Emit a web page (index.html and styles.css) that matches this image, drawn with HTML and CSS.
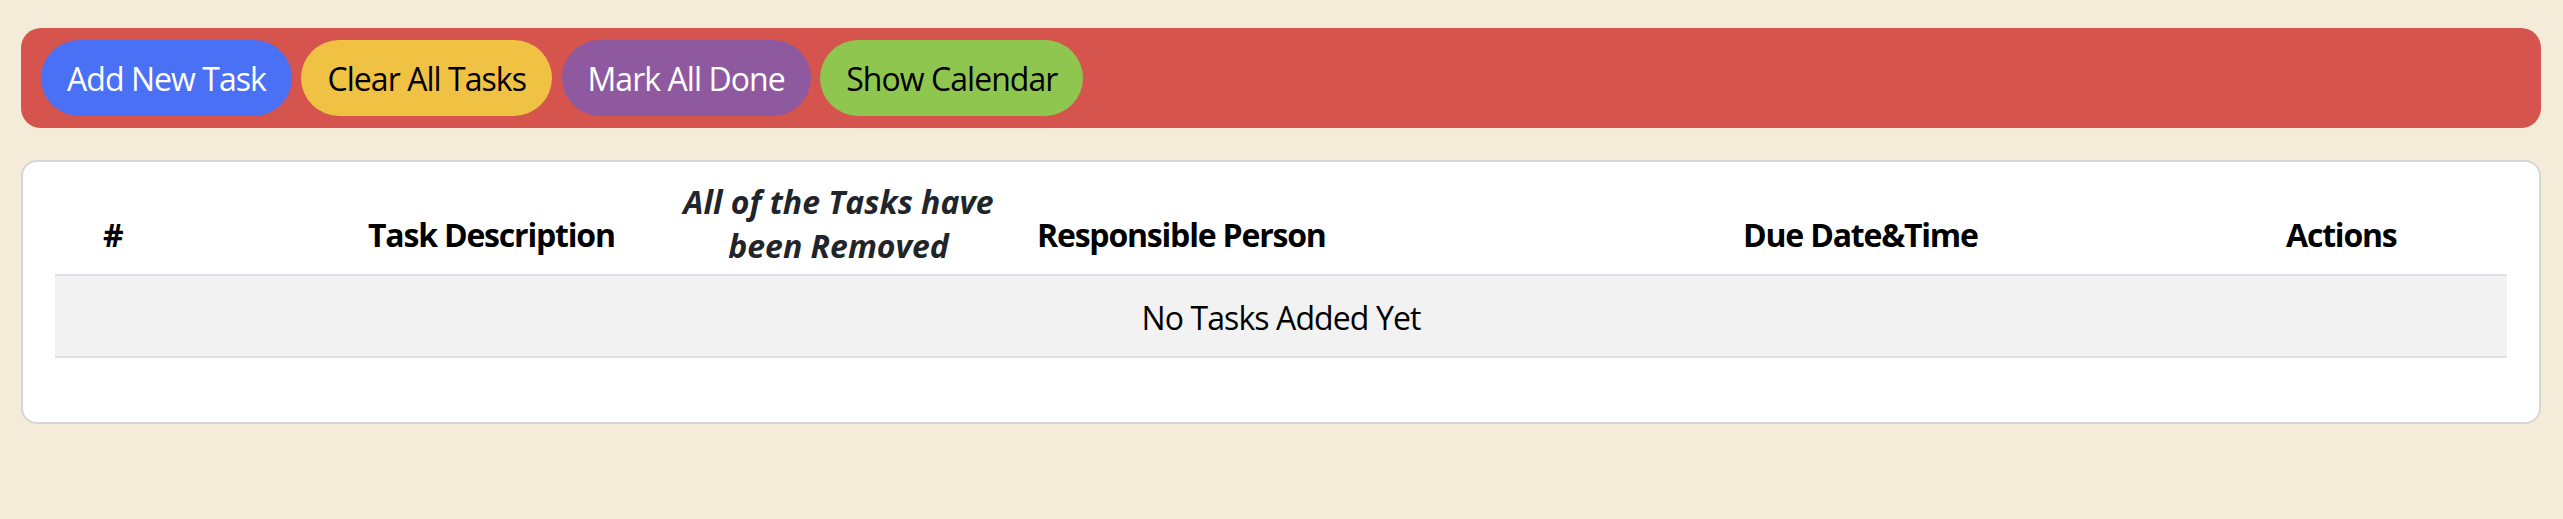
FILE: index.html
```html
<!DOCTYPE html>
<html lang="en">
<head>
<meta charset="utf-8">
<title>Tasks</title>
<link rel="stylesheet" href="styles.css">
</head>
<body>
<div class="page">
  <div class="toolbar">
    <button class="btn btn-blue">Add New Task</button>
    <button class="btn btn-yellow">Clear All Tasks</button>
    <button class="btn btn-purple">Mark All Done</button>
    <button class="btn btn-green">Show Calendar</button>
  </div>
  <div class="card">
    <table class="tasks">
      <colgroup>
        <col class="w-num">
        <col class="w-desc">
        <col class="w-msg">
        <col class="w-person">
        <col class="w-due">
        <col class="w-actions">
      </colgroup>
      <thead>
        <tr>
          <th class="c-num">#</th>
          <th>Task Description</th>
          <th class="c-msg"><div class="msg">All of the Tasks have<br>been Removed</div></th>
          <th>Responsible Person</th>
          <th>Due Date&amp;Time</th>
          <th>Actions</th>
        </tr>
      </thead>
      <tbody>
        <tr>
          <td colspan="6" class="empty">No Tasks Added Yet</td>
        </tr>
      </tbody>
    </table>
  </div>
</div>
</body>
</html>
```
FILE: styles.css
```css
html, body {
  margin: 0;
  padding: 0;
  background: #f4ebd9;
}
body {
  font-family: "Open Sans", "Noto Sans", sans-serif;
  font-size: 32px;
  line-height: 1.5;
  color: #212529;
}
.page {
  padding: 28px 22px 0 21px;
}
.toolbar {
  display: flex;
  gap: 9.5px;
  background: #d5544e;
  border-radius: 20px;
  padding: 12px 20px;
}
.btn {
  font-family: inherit;
  font-size: 32px;
  line-height: 48px;
  letter-spacing: -0.95px;
  padding: 13px 24px 11px;
  border: 2px solid transparent;
  border-radius: 999px;
  cursor: pointer;
}
.btn-blue { background: #4a70f5; color: #fff; }
.btn-yellow { background: #f0c243; color: #000; }
.btn-purple { background: #8e599f; color: #fff; }
.btn-green { background: #8fc650; color: #000; }

.card {
  margin-top: 32px;
  background: #fff;
  border: 2px solid #d6d6d6;
  border-radius: 16px;
  padding: 32px;
}
.tasks {
  width: 100%;
  border-collapse: collapse;
  table-layout: fixed;
  margin-bottom: 32px;
}
.w-num { width: 297px; }
.w-desc { width: 304px; }
.w-msg { width: 365px; }
.w-person { width: 706px; }
.w-due { width: 543px; }
.w-actions { width: 237px; }

.tasks th,
.tasks td {
  padding: 16px;
  line-height: 48px;
  border-bottom: 2px solid #dee2e6;
}
.tasks th {
  padding-top: 17px;
  padding-bottom: 15px;
  text-align: left;
  vertical-align: bottom;
  font-weight: 700;
  letter-spacing: -1.2px;
  color: #000;
  white-space: nowrap;
}
.tasks th.c-num {
  padding-left: 48px;
}
.tasks th.c-msg {
  position: relative;
}
.msg {
  position: absolute;
  left: 0;
  right: 0;
  top: -14px;
  text-align: center;
  font-style: italic;
  font-weight: 700;
  letter-spacing: 0;
  line-height: 44.4px;
  color: #212529;
}
.tasks td.empty {
  padding-top: 18px;
  padding-bottom: 14px;
  text-align: center;
  letter-spacing: -0.9px;
  background: #f2f2f2;
  color: #000;
}
```
